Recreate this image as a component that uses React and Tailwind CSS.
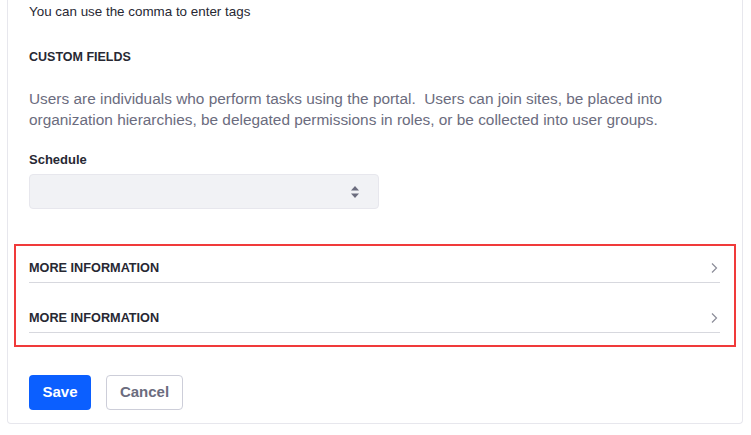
import React from 'react'

function Chevron() {
  return (
    <svg width="8" height="12" viewBox="0 0 8 12" className="text-[#8b8c98]">
      <path d="M2 1.5 L6.5 6 L2 10.5" fill="none" stroke="currentColor" strokeWidth="1.2" />
    </svg>
  )
}

function SelectArrows() {
  return (
    <svg width="10" height="14" viewBox="0 0 10 14" className="text-[#6b6c7e]">
      <path d="M5 1 L9 5.5 L1 5.5 Z" fill="currentColor" />
      <path d="M5 13 L9 8.5 L1 8.5 Z" fill="currentColor" />
    </svg>
  )
}

function MoreRow() {
  return (
    <div className="flex items-center justify-between border-b border-[#d7d8de] pb-[5px] pt-[13px]">
      <span className="h-[18px] text-[12.7px] font-semibold leading-[18px] text-[#272833]">MORE INFORMATION</span>
      <span className="mr-[2px]">
        <Chevron />
      </span>
    </div>
  )
}

export default function App() {
  return (
    <div className="h-[435px] w-[751px] overflow-hidden bg-white px-[7px]" style={{ fontFamily: '"Liberation Sans", Arial, sans-serif' }}>
      <div className="flex w-[736px] flex-col rounded-b-[4px] border border-t-0 border-[#e7e7ed] pb-[13px]">
        <div className="pl-[21px]">
          <div className="mt-[3px] h-[18px] text-[13.4px] leading-[18px] text-[#272833]">You can use the comma to enter tags</div>
          <div className="mt-[27px] h-[18px] text-[12.5px] font-semibold leading-[18px] text-[#272833]">CUSTOM FIELDS</div>
          <p className="mt-[22px] w-[680px] text-[15.4px] leading-[21px] text-[#6b6c7e]">
            Users are individuals who perform tasks using the portal.&nbsp; Users can join sites, be placed into organization hierarchies, be delegated permissions in roles, or be collected into user groups.
          </p>
          <div className="mt-[21px] h-[18px] text-[13px] font-semibold leading-[18px] text-[#272833]">Schedule</div>
          <div className="mt-[5px] flex h-[35px] w-[350px] items-center justify-end rounded-[4px] border border-[#e7e7ed] bg-[#f1f2f5] pr-[18px]">
            <SelectArrows />
          </div>
        </div>

        <div className="mx-[6px] mt-[35px] border-2 border-[#f03a3a] pb-[12px] pl-[13px] pr-[14px]">
          <MoreRow />
          <div className="mt-[13px]">
            <MoreRow />
          </div>
        </div>

        <div className="mt-[28px] flex gap-[15px] pl-[21px]">
          <button className="h-[35px] w-[62px] rounded-[4px] bg-[#0b5fff] text-[15px] font-semibold text-white">Save</button>
          <button className="h-[35px] w-[77px] rounded-[4px] border border-[#cdced9] bg-white text-[15px] font-semibold text-[#6b6c7e]">Cancel</button>
        </div>
      </div>
    </div>
  )
}
